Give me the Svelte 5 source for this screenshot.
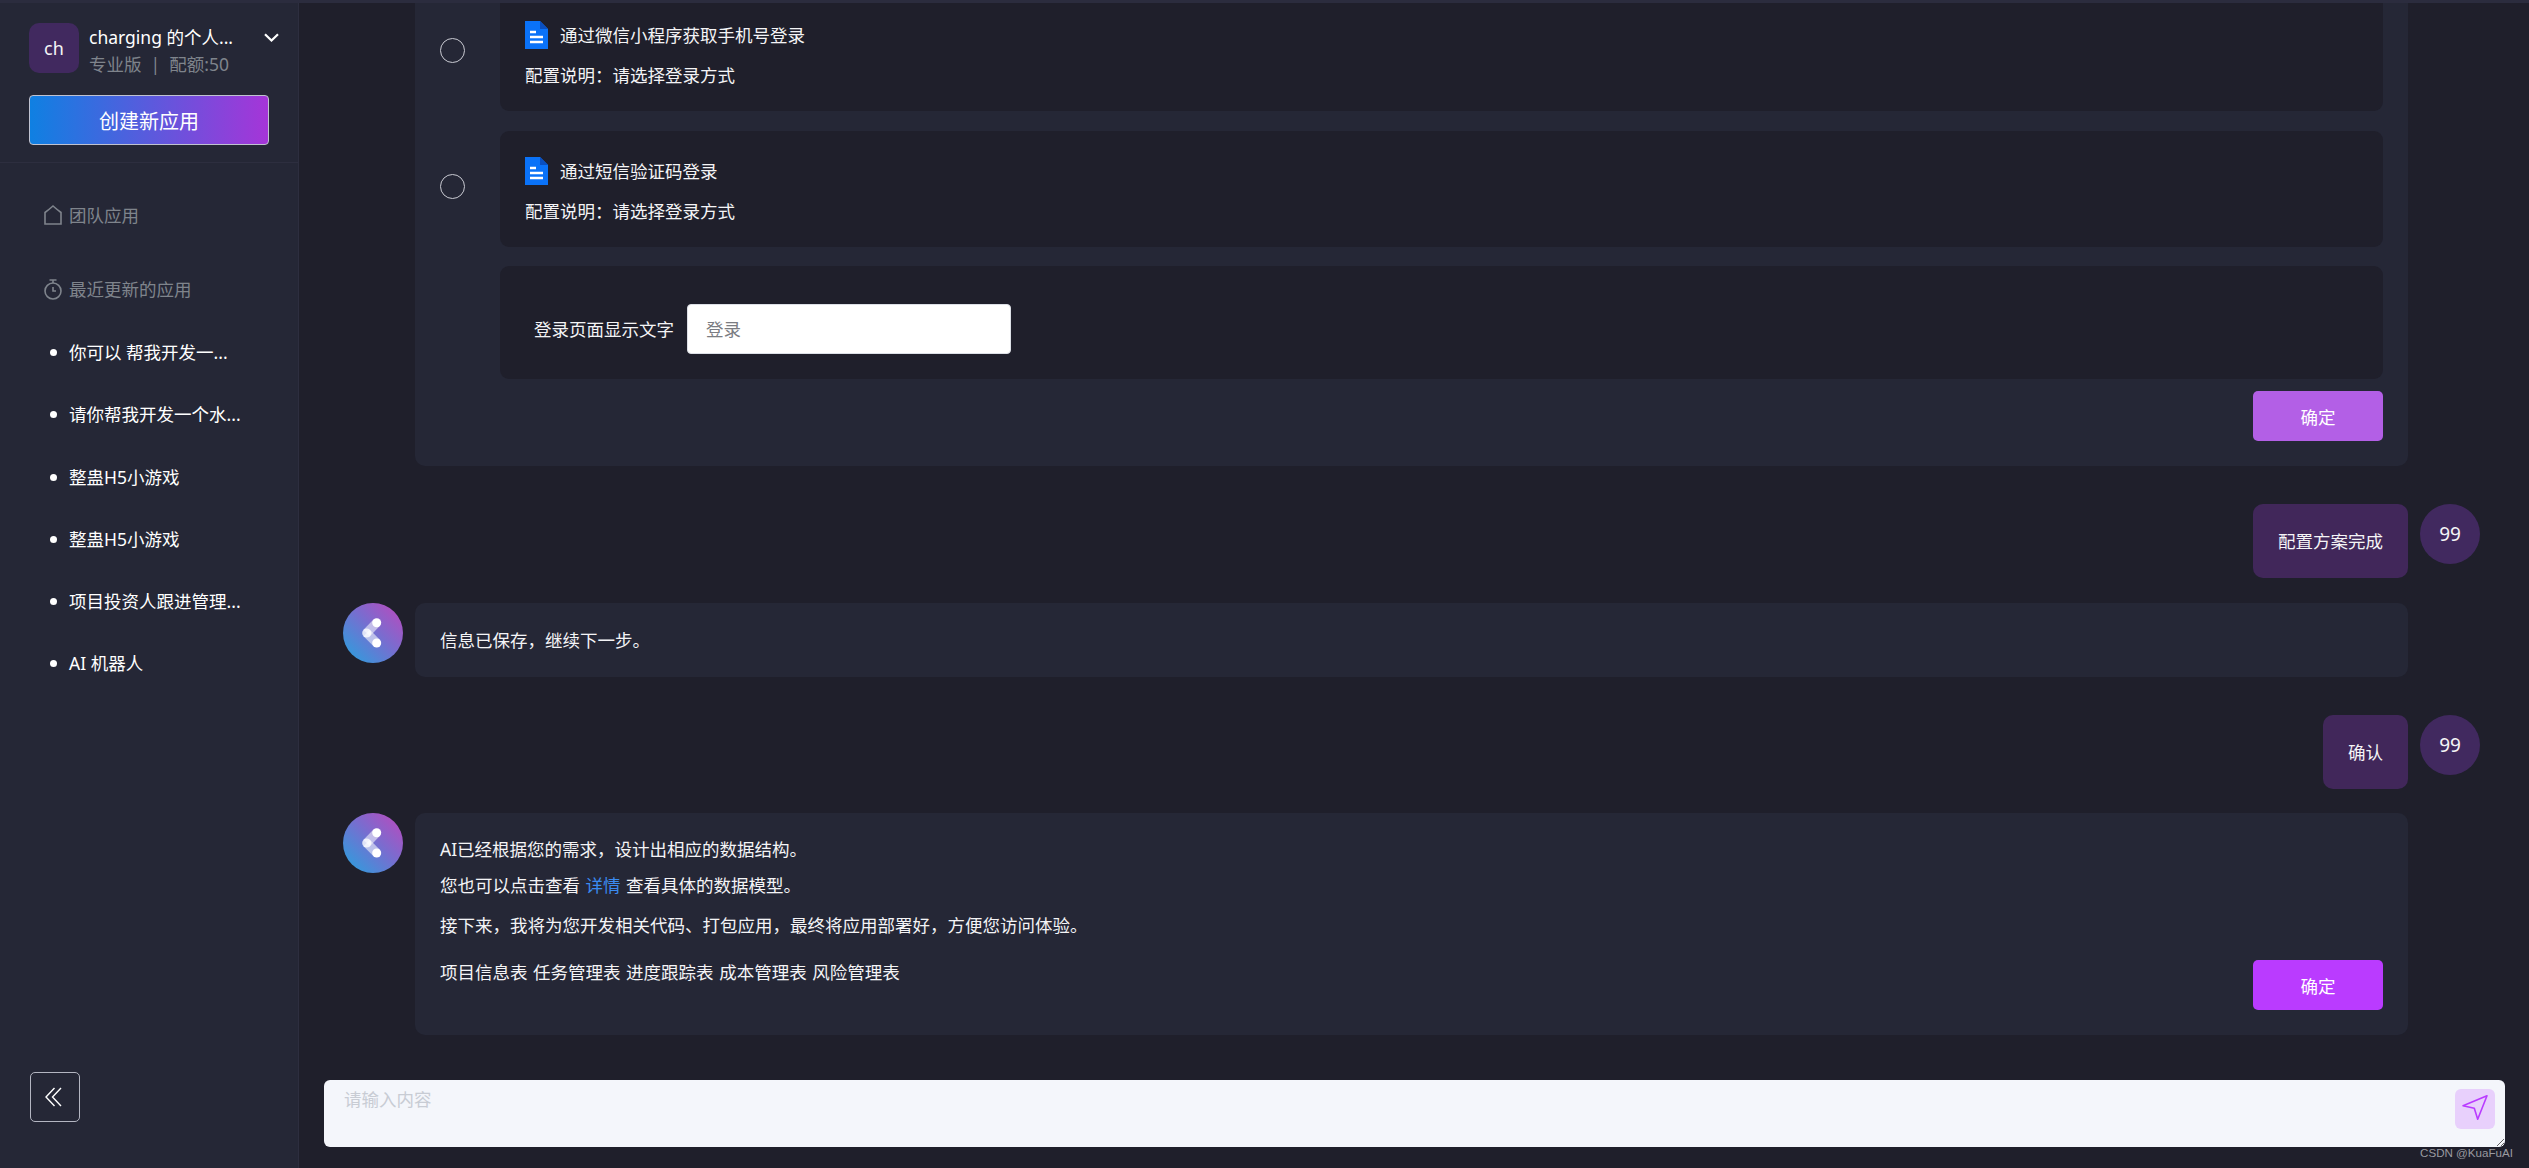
<script>
	const recent = ['你可以 帮我开发一...', '请你帮我开发一个水...', '整蛊H5小游戏', '整蛊H5小游戏', '项目投资人跟进管理...', 'AI 机器人'];
	const logins = ['通过微信小程序获取手机号登录', '通过短信验证码登录'];
	const tables = '项目信息表 任务管理表 进度跟踪表 成本管理表 风险管理表';
</script>

{#snippet botAvatar()}
	<div class="bot">
		<svg width="60" height="60" viewBox="0 0 60 60">
			<path d="M33.7 19.7 23.7 30" stroke="#fff" stroke-opacity=".55" stroke-width="9" />
			<path d="M23.7 30 33.7 40" stroke="#fff" stroke-opacity=".55" stroke-width="9" />
			<circle cx="33.7" cy="19.7" r="4.5" fill="#fff" />
			<circle cx="33.7" cy="40" r="4.5" fill="#fff" />
			<circle cx="23.7" cy="30" r="4.5" fill="#fff" fill-opacity=".8" />
		</svg>
	</div>
{/snippet}

<div class="page">
	<aside class="sidebar">
		<div class="head">
			<div class="account">
				<div class="logo">ch</div>
				<div class="who">
					<div class="name">charging 的个人...</div>
					<div class="plan">专业版&nbsp;&nbsp;|&nbsp;&nbsp;配额:50</div>
				</div>
				<svg class="chevron" width="15" height="9" viewBox="0 0 15 9" fill="none">
					<path d="M1 1.2 7.5 7.5 14 1.2" stroke="#fff" stroke-width="2.2" />
				</svg>
			</div>
			<button class="create">创建新应用</button>
		</div>

		<div class="menu first">
			<svg width="18" height="20" viewBox="0 0 18 20" fill="none">
				<path d="M1 19V7.5Q5 4.5 9 1 13 4.5 17 7.5V19Z" stroke="#7f848c" stroke-width="1.6" />
			</svg>
			<span>团队应用</span>
		</div>
		<div class="menu">
			<svg width="18" height="21" viewBox="0 0 18 21" fill="none">
				<circle cx="9" cy="12" r="8" stroke="#7f848c" stroke-width="1.6" />
				<path d="M5.5 1H12.5M9 1V4M9 8V12H12" stroke="#7f848c" stroke-width="1.6" />
			</svg>
			<span>最近更新的应用</span>
		</div>

		<ul class="recent">
			{#each recent as item}
				<li>{item}</li>
			{/each}
		</ul>

		<button class="collapse" aria-label="收起">
			<svg width="17" height="20" viewBox="0 0 17 20" fill="none">
				<path d="M9.5 1 1 10 9.5 19M16 1 7.5 10 16 19" stroke="#fff" stroke-width="1.4" />
			</svg>
		</button>
	</aside>

	<main class="main">
		<div class="chat">
			<div class="row bot-row">
				<div class="slot"></div>
				<div class="bubble form">
					{#each logins as title}
						<div class="option">
							<span class="radio"></span>
							<div class="card">
								<div class="title">
									<svg width="23" height="28" viewBox="0 0 23 28">
										<path d="M0 0H15L23 8V28H0Z" fill="#0a72f8" />
										<path d="M15 0 23 8H15Z" fill="#0a4fc0" />
										<path d="M5 11H11M5 16H18M5 21H18" stroke="#fff" stroke-width="2.4" />
									</svg>
									<span>{title}</span>
								</div>
								<div class="desc">配置说明&#65306;请选择登录方式</div>
							</div>
						</div>
					{/each}
					<div class="card field">
						<label for="login-text">登录页面显示文字</label>
						<input id="login-text" value="登录" />
					</div>
					<div class="actions">
						<button class="ok faded">确定</button>
					</div>
				</div>
			</div>

			<div class="row user-row">
				<div class="bubble mine">配置方案完成</div>
				<div class="user">99</div>
			</div>

			<div class="row bot-row">
				{@render botAvatar()}
				<div class="bubble">信息已保存&#65292;继续下一步。</div>
			</div>

			<div class="row user-row tight">
				<div class="bubble mine">确认</div>
				<div class="user">99</div>
			</div>

			<div class="row bot-row last">
				{@render botAvatar()}
				<div class="bubble summary">
					<p>AI已经根据您的需求&#65292;设计出相应的数据结构。</p>
					<p class="p2">您也可以点击查看 <a href="#details">详情</a> 查看具体的数据模型。</p>
					<p class="p3">接下来&#65292;我将为您开发相关代码、打包应用&#65292;最终将应用部署好&#65292;方便您访问体验。</p>
					<div class="tables">
						<span>{tables}</span>
						<button class="ok">确定</button>
					</div>
				</div>
			</div>
		</div>

		<div class="composer">
			<textarea placeholder="请输入内容"></textarea>
			<button class="send" aria-label="发送">
				<svg width="40" height="40" viewBox="0 0 40 40" fill="none">
					<path d="M32 6.7 8 16.7 19.3 19.3 22.7 30.3Z" stroke="#b93cff" stroke-width="1.6" stroke-linejoin="round" />
				</svg>
			</button>
		</div>
	</main>

	<div class="watermark">CSDN @KuaFuAI</div>
</div>

<style>
	:global(body) {
		margin: 0;
		background: #1f1f2b;
	}

	.page {
		display: flex;
		position: relative;
		height: 1168px;
		overflow: hidden;
		box-sizing: border-box;
		border-top: 3px solid #2b2c3e;
		font-family: 'Noto Sans', 'Noto Sans CJK SC', sans-serif;
		font-size: 17.5px;
		line-height: 24px;
		color: #f4f4f6;
		background: #1f1f2b;
	}

	button {
		font-family: inherit;
		cursor: pointer;
	}

	/* sidebar */
	.sidebar {
		display: flex;
		flex-direction: column;
		flex: none;
		box-sizing: border-box;
		width: 299px;
		padding-bottom: 46px;
		background: #252736;
		border-right: 1px solid #2d2e3f;
	}

	.head {
		padding: 20px 29px 17px;
		border-bottom: 1px solid #2d2e3f;
	}

	.account {
		display: flex;
		align-items: center;
		height: 50px;
	}

	.logo {
		display: flex;
		align-items: center;
		justify-content: center;
		flex: none;
		width: 50px;
		height: 50px;
		border-radius: 10px;
		background: #41295f;
		font-size: 18px;
	}

	.who {
		flex: 1;
		margin-left: 10px;
		padding-top: 5px;
		white-space: nowrap;
	}

	.name {
		line-height: 26px;
		color: #fff;
	}

	.plan {
		line-height: 28px;
		color: #7f848c;
	}

	.chevron {
		margin: -22px -10px 0 0;
	}

	.create {
		display: block;
		width: 240px;
		height: 50px;
		margin-top: 22px;
		padding: 0;
		border: 1px solid #c0c2d0;
		border-radius: 4px;
		background: linear-gradient(90deg, #0f80e2, #a535d8);
		color: #fff;
		font-size: 20px;
	}

	.menu {
		display: flex;
		align-items: center;
		gap: 7px;
		height: 24px;
		margin: 50px 0 0 44px;
		color: #7f848c;
	}

	.menu.first {
		margin-top: 40px;
	}

	.recent {
		list-style: none;
		margin: 0;
		padding: 20px 0 0 69px;
	}

	.recent li {
		position: relative;
		height: 62.3px;
		line-height: 62.3px;
		color: #fff;
		white-space: nowrap;
	}

	.recent li::before {
		content: '';
		position: absolute;
		left: -19px;
		top: 28px;
		width: 7px;
		height: 7px;
		border-radius: 50%;
		background: #fff;
	}

	.collapse {
		display: flex;
		align-items: center;
		justify-content: center;
		width: 50px;
		height: 50px;
		margin: auto 0 0 30px;
		padding: 0 3px 0 0;
		border: 1px solid #b4b6c2;
		border-radius: 5px;
		background: transparent;
	}

	/* chat column */
	.main {
		display: flex;
		flex-direction: column;
		flex: 1;
		min-width: 0;
		height: 100%;
		padding-bottom: 21px;
		box-sizing: border-box;
	}

	.chat {
		display: flex;
		flex-direction: column;
		justify-content: flex-end;
		flex: 1;
		min-height: 0;
		overflow: hidden;
		padding: 0 49px 45px 44px;
	}

	.row {
		display: flex;
		flex: none;
		gap: 12px;
		margin-bottom: 25px;
	}

	.row.tight {
		margin-bottom: 24px;
	}

	.bot-row {
		margin-bottom: 38px;
		padding-right: 72px;
	}

	.bot-row.last {
		margin-bottom: 0;
	}

	.user-row {
		justify-content: flex-end;
	}

	.slot,
	.bot {
		flex: none;
		width: 60px;
		height: 60px;
	}

	.bot {
		border-radius: 50%;
		background: linear-gradient(45deg, #3b95db 15%, #7a6ccf 55%, #b04fc0 90%);
	}

	.bot svg {
		display: block;
	}

	.bubble {
		flex: 1;
		box-sizing: border-box;
		padding: 25px;
		border-radius: 10px;
		background: #252736;
	}

	.mine {
		flex: none;
		background: #41275a;
	}

	.user {
		display: flex;
		align-items: center;
		justify-content: center;
		flex: none;
		width: 60px;
		height: 60px;
		border-radius: 50%;
		background: #41295f;
		font-size: 19px;
	}

	/* login form bubble */
	.form {
		display: flex;
		flex-direction: column;
		gap: 20px;
	}

	.option {
		display: flex;
		align-items: center;
		gap: 35px;
	}

	.radio {
		flex: none;
		box-sizing: border-box;
		width: 25px;
		height: 25px;
		margin-bottom: 6px;
		border: 1px solid #c9cad2;
		border-radius: 50%;
	}

	.card {
		flex: 1;
		box-sizing: border-box;
		height: 116px;
		padding: 26px 16px 0 25px;
		border-radius: 9px;
		background: #1f1f2b;
	}

	.title {
		display: flex;
		align-items: center;
		gap: 12px;
		height: 28px;
	}

	.desc {
		margin-top: 14px;
	}

	.field {
		flex: none;
		display: flex;
		align-items: center;
		gap: 13px;
		height: 113px;
		margin: -1px 0 0 60px;
		padding: 13px 0 0 34px;
	}

	.field input {
		box-sizing: border-box;
		width: 324px;
		height: 50px;
		padding: 0 18px 2px;
		border: 1px solid #dcdfe6;
		border-radius: 4px;
		outline: none;
		background: #fff;
		color: #7a7c82;
		font: inherit;
	}

	.actions {
		display: flex;
		justify-content: flex-end;
		margin-top: -8px;
	}

	.ok {
		flex: none;
		width: 130px;
		height: 50px;
		padding: 0;
		border: 0;
		border-radius: 5px;
		background: #ba3bff;
		color: #fff;
		font-size: 17.5px;
	}

	.ok.faded {
		background: #b35fe6;
	}

	/* summary bubble */
	.summary {
		padding-top: 24px;
		word-spacing: 1px;
	}

	.summary p {
		margin: 0;
	}

	.p2 {
		padding-top: 12px;
	}

	.p3 {
		padding-top: 16px;
	}

	.summary a {
		color: #3b8bf0;
		text-decoration: none;
	}

	.tables {
		display: flex;
		justify-content: space-between;
		align-items: flex-start;
		margin-top: 23px;
	}

	/* input */
	.composer {
		position: relative;
		flex: none;
		height: 67px;
		margin: 0 24px 0 25px;
	}

	.composer textarea {
		display: block;
		box-sizing: border-box;
		width: 100%;
		height: 67px;
		padding: 7px 20px;
		border: 0;
		border-radius: 6px;
		outline: none;
		background: #f4f6fb;
		font: inherit;
		color: #333;
	}

	.composer textarea::placeholder {
		color: #c8ccd4;
	}

	.send {
		position: absolute;
		top: 9px;
		right: 10px;
		width: 40px;
		height: 40px;
		padding: 0;
		border: 0;
		border-radius: 6px;
		background: #e8d0fc;
	}

	.send svg {
		display: block;
	}

	.watermark {
		position: absolute;
		right: 16px;
		bottom: 8px;
		font-family: 'Liberation Sans', sans-serif;
		font-size: 11.6px;
		line-height: 14px;
		color: #9a9aa0;
	}
</style>
